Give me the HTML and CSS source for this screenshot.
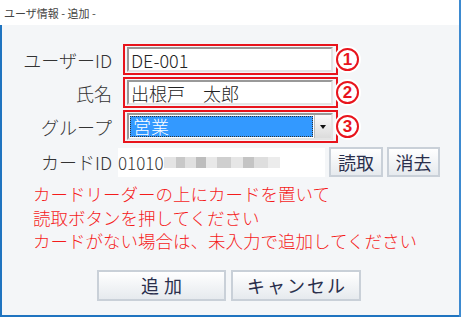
FILE: index.html
```html
<!DOCTYPE html>
<html lang="ja">
<head>
    <meta charset="UTF-8">
    <title>ユーザ情報 - 追加 -</title>
    <link rel="stylesheet" href="styles.css">
</head>
<body>
    <div class="window">
        <div class="titlebar">ユーザ情報 - 追加 -</div>
        <div class="content">
            <div class="form">
                <div class="row">
                    <div class="label">ユーザーID</div>
                    <div class="mark">
                        <input type="text" class="field" value="DE-001">
                    </div>
                    <span class="badge">1</span>
                </div>
                <div class="row">
                    <div class="label">氏名</div>
                    <div class="mark">
                        <input type="text" class="field" value="出根戸　太郎">
                    </div>
                    <span class="badge">2</span>
                </div>
                <div class="row">
                    <div class="label">グループ</div>
                    <div class="mark">
                        <div class="select">
                            <div class="select-value">営業</div>
                            <div class="select-arrow"></div>
                        </div>
                    </div>
                    <span class="badge">3</span>
                </div>
                <div class="row card-row">
                    <div class="label">カードID</div>
                    <div class="card-value">01010<span class="masked"></span></div>
                    <button class="btn small">読取</button>
                    <button class="btn small">消去</button>
                </div>
            </div>

            <p class="notice">
                カードリーダーの上にカードを置いて<br>
                読取ボタンを押してください<br>
                カードがない場合は、未入力で追加してください
            </p>

            <div class="actions">
                <button class="btn wide add">追加</button>
                <button class="btn wide cancel">キャンセル</button>
            </div>
        </div>
    </div>
</body>
</html>
```

FILE: styles.css
```css
body {
    margin: 0;
    font-family: "Noto Sans CJK JP", "Noto Sans", sans-serif;
    background-color: #fff;
}
.window {
    width: 461px;
    height: 317px;
    box-sizing: border-box;
    border-right: 2px solid #3d8ad0;
    display: flex;
    flex-direction: column;
}
.titlebar {
    height: 25px;
    line-height: 26px;
    padding-left: 4px;
    font-size: 11px;
    color: #444;
    background-color: #fff;
}
.content {
    flex: 1;
    background-color: #f4f6f8;
    border-left: 2px solid #1f74c0;
    border-bottom: 2px solid #1f74c0;
    padding-top: 19px;
}
.form {
    display: flex;
    flex-direction: column;
    gap: 2px;
}
.row {
    display: flex;
    align-items: center;
}
.label {
    width: 110px;
    margin-right: 11px;
    text-align: right;
    font-size: 18px;
    font-weight: 300;
    color: #333;
}
.mark {
    width: 215px;
    box-sizing: border-box;
    border: 2px solid #e8141c;
    padding: 1px 3px 1px 2px;
}
.field {
    display: block;
    width: 100%;
    height: 25px;
    box-sizing: border-box;
    margin: 0;
    padding: 0 2px;
    border: 2px solid;
    border-color: #999 #e4e4e4 #e4e4e4 #999;
    background-color: #fff;
    font-family: inherit;
    font-size: 18px;
    font-weight: 300;
    color: #222;
    outline: none;
}
.select {
    display: flex;
    height: 27px;
    box-sizing: border-box;
    border: 2px solid;
    border-color: #999 #e4e4e4 #e4e4e4 #999;
    background-color: #fff;
}
.select-value {
    flex: 1;
    margin: 1px;
    padding-left: 2px;
    border: 1px dotted #333;
    background-color: #3399ff;
    color: #fff;
    font-size: 18px;
    font-weight: 300;
    line-height: 19px;
}
.select-arrow {
    width: 16px;
    background: linear-gradient(#fafafa, #dcdcdc);
    border-left: 1px solid #bbb;
    display: flex;
    align-items: center;
    justify-content: center;
}
.select-arrow::after {
    content: "";
    border-left: 3px solid transparent;
    border-right: 3px solid transparent;
    border-top: 4px solid #111;
}
.badge {
    width: 23px;
    height: 23px;
    box-sizing: border-box;
    margin-left: -2px;
    border: 2px solid #e8141c;
    border-radius: 50%;
    background-color: #fff;
    box-shadow: 0 0 0 2px #fff;
    color: #e8141c;
    font-family: "Liberation Sans", sans-serif;
    font-weight: bold;
    font-size: 17px;
    line-height: 19px;
    text-align: center;
}
.card-row {
    margin-top: 2px;
}
.card-row .label {
    margin-right: 6px;
}
.card-value {
    width: 207px;
    height: 29px;
    line-height: 29px;
    background-color: #fff;
    font-size: 17px;
    font-weight: 300;
    color: #333;
    display: flex;
    align-items: center;
}
.masked {
    display: inline-block;
    width: 116px;
    height: 11px;
    margin-left: 1px;
    background: linear-gradient(90deg, #e4e4e4 0 10%, #c8c8c8 10% 18%, #e0e0e0 18% 28%, #bdbdbd 28% 36%, #e8e8e8 36% 46%, #cfcfcf 46% 58%, #e6e6e6 58% 68%, #c4c4c4 68% 78%, #dedede 78% 90%, #ececec 90%);
}
.btn {
    margin: 0;
    padding: 0;
    height: 30px;
    box-sizing: border-box;
    border: 2px solid #c9d0d8;
    background: linear-gradient(#ffffff, #e6eaee);
    font-family: inherit;
    font-size: 18px;
    color: #2a2f4c;
    cursor: pointer;
}
.btn.small {
    width: 54px;
    margin-left: 4px;
}
.btn.small + .btn.small {
    width: 53px;
}
.notice {
    margin: 5px 0 0 31px;
    font-size: 17.5px;
    font-weight: 300;
    line-height: 23.5px;
    color: #f41c1c;
}
.actions {
    display: flex;
    justify-content: center;
    gap: 5px;
    margin-top: 17px;
    padding-right: 3px;
}
.btn.wide {
    width: 129px;
    height: 31px;
}
.btn.add {
    letter-spacing: 5px;
    padding-left: 5px;
}
.btn.cancel {
    width: 130px;
    letter-spacing: 2px;
    padding-left: 2px;
}
```
